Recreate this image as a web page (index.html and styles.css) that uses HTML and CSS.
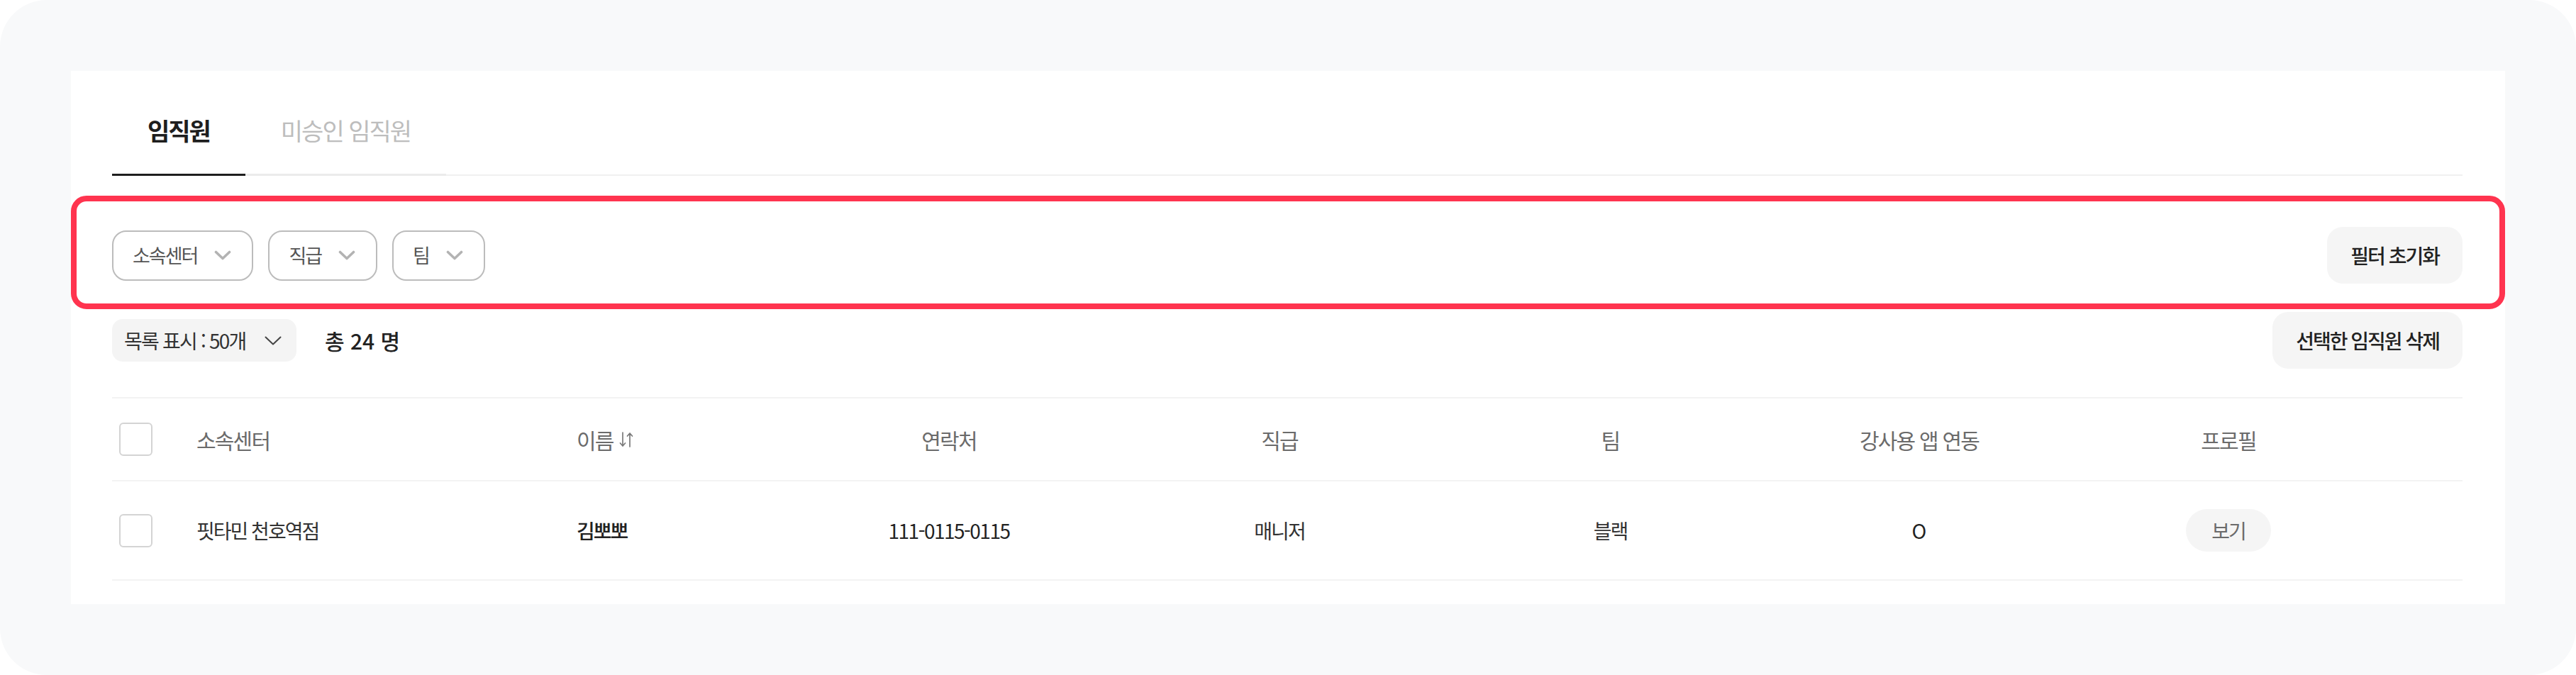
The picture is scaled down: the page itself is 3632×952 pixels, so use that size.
FILE: index.html
```html
<!DOCTYPE html>
<html lang="ko">
<head>
<meta charset="utf-8">
<title>임직원</title>
<link rel="stylesheet" href="styles.css">
</head>
<body>
<div class="panel">
  <main class="card">
    <nav class="tabs">
      <div class="tab tab-active">임직원</div>
      <div class="tab">미승인 임직원</div>
    </nav>

    <section class="filters">
      <div class="chips">
        <button class="chip"><span class="chip-label">소속센터</span><svg class="chip-caret" viewBox="0 0 24 14" width="24" height="14"><polyline points="2.5,2.5 12,11.5 21.5,2.5"/></svg></button>
        <button class="chip"><span class="chip-label">직급</span><svg class="chip-caret" viewBox="0 0 24 14" width="24" height="14"><polyline points="2.5,2.5 12,11.5 21.5,2.5"/></svg></button>
        <button class="chip"><span class="chip-label">팀</span><svg class="chip-caret" viewBox="0 0 24 14" width="24" height="14"><polyline points="2.5,2.5 12,11.5 21.5,2.5"/></svg></button>
      </div>
      <button class="btn btn-reset">필터 초기화</button>
    </section>

    <div class="toolbar">
      <div class="toolbar-left">
        <button class="page-size"><span>목록 표시 : 50개</span><svg class="page-caret" viewBox="0 0 24 13" width="24" height="13"><polyline points="1.5,1.5 12,11.5 22.5,1.5"/></svg></button>
        <div class="total">총 24 명</div>
      </div>
      <button class="btn btn-delete">선택한 임직원 삭제</button>
    </div>

    <div class="table">
      <div class="row row-head">
        <div class="cell"><span class="checkbox"></span></div>
        <div class="cell">소속센터</div>
        <div class="cell cell-sort">이름<svg class="sort-icon" viewBox="0 0 20 24" width="20" height="24"><path d="M5 2 V21 M1.5 17 L5 21 L8.5 17 M15 22 V3 M11.5 7 L15 3 L18.5 7"/></svg></div>
        <div class="cell center">연락처</div>
        <div class="cell center">직급</div>
        <div class="cell center">팀</div>
        <div class="cell center">강사용 앱 연동</div>
        <div class="cell center">프로필</div>
        <div class="cell"></div>
      </div>
      <div class="row row-body">
        <div class="cell"><span class="checkbox"></span></div>
        <div class="cell">핏타민 천호역점</div>
        <div class="cell name">김뽀뽀</div>
        <div class="cell center phone">111-0115-0115</div>
        <div class="cell center">매니저</div>
        <div class="cell center">블랙</div>
        <div class="cell center latin">O</div>
        <div class="cell center"><button class="view-btn">보기</button></div>
        <div class="cell"></div>
      </div>
    </div>
  </main>
</div>
</body>
</html>
```

FILE: styles.css
```css
html, body {
  margin: 0;
  padding: 0;
  background: #ffffff;
}

body {
  font-family: "Noto Sans CJK KR", "Noto Sans", sans-serif;
  color: #222222;
}

button {
  font: inherit;
  color: inherit;
  border: 0;
  background: none;
  padding: 0;
  margin: 0;
}

.panel {
  width: 3632px;
  height: 952px;
  box-sizing: border-box;
  background: #f8f9fa;
  border-radius: 66px;
  padding: 100px;
}

.card {
  background: #ffffff;
  height: 752px;
  box-sizing: border-box;
  padding: 0 60px 0 58px;
}

/* Tabs */
.tabs {
  display: flex;
  border-bottom: 2px solid #f0f0f0;
}

.tab {
  padding: 64px 50px 41px;
  margin-bottom: -2px;
  font-size: 34px;
  line-height: 40px;
  letter-spacing: -2px;
  color: #bdbdbd;
  border-bottom: 3px solid #ebebeb;
}

.tab-active {
  color: #1e1e1e;
  font-weight: 700;
  border-bottom-color: #1e1e1e;
}

/* Filters */
.filters {
  position: relative;
  margin-top: 72px;
  height: 80px;
  display: flex;
  align-items: center;
  justify-content: space-between;
}

.filters::after {
  content: "";
  position: absolute;
  left: -58px;
  right: -60px;
  top: -44px;
  bottom: -36px;
  border: 8px solid #ff344f;
  border-radius: 22px;
  pointer-events: none;
}

.chips {
  display: flex;
  gap: 21px;
}

.chip {
  height: 71px;
  box-sizing: border-box;
  display: flex;
  align-items: center;
  gap: 24px;
  padding: 0 29px 0 27px;
  border: 2px solid #bcbcbc;
  border-radius: 20px;
  background: #ffffff;
}

.chip-label {
  font-size: 27px;
  line-height: 32px;
  letter-spacing: -2px;
  color: #555555;
}

.chip-caret {
  display: block;
  fill: none;
  stroke: #b3b3b3;
  stroke-width: 3.6;
  stroke-linecap: round;
  stroke-linejoin: round;
}

.btn {
  height: 80px;
  box-sizing: border-box;
  padding: 0 33px;
  border-radius: 22px;
  background: #f5f5f5;
  font-size: 28px;
  line-height: 32px;
  letter-spacing: -2px;
  font-weight: 500;
  color: #222222;
}

/* Toolbar */
.toolbar {
  margin-top: 40px;
  height: 80px;
  display: flex;
  align-items: center;
  justify-content: space-between;
}

.toolbar-left {
  display: flex;
  align-items: center;
  gap: 40px;
}

.page-size {
  width: 260px;
  height: 60px;
  box-sizing: border-box;
  display: flex;
  align-items: center;
  justify-content: space-between;
  padding: 0 21px 0 17px;
  border-radius: 15px;
  background: #f4f4f4;
  font-size: 28px;
  line-height: 32px;
  letter-spacing: -1.8px;
  color: #333333;
}

.page-caret {
  display: block;
  fill: none;
  stroke: #444444;
  stroke-width: 2;
  stroke-linecap: round;
  stroke-linejoin: round;
}

.total {
  font-size: 30px;
  line-height: 36px;
  font-weight: 500;
  color: #222222;
}

/* Table */
.table {
  margin-top: 40px;
  border-top: 2px solid #f3f3f3;
}

.row {
  display: grid;
  grid-template-columns: 119px 536px 292px 466px 466px 467px 404px 468px 1fr;
  align-items: center;
  border-bottom: 2px solid #f3f3f3;
}

.row-head {
  height: 115px;
  font-size: 30px;
  line-height: 34px;
  letter-spacing: -1.8px;
  color: #6b6b6b;
}

.row-body {
  height: 138px;
  font-size: 28px;
  line-height: 32px;
  letter-spacing: -2px;
  color: #333333;
}

.cell {
  display: flex;
  align-items: center;
}

.center {
  justify-content: center;
}

.cell-sort {
  gap: 8px;
}

.sort-icon {
  display: block;
  fill: none;
  stroke: #7a7a7a;
  stroke-width: 1.7;
  stroke-linecap: round;
  stroke-linejoin: round;
}

.checkbox {
  display: block;
  width: 47px;
  height: 47px;
  box-sizing: border-box;
  margin-left: 10px;
  border: 2px solid #d4d4d4;
  border-radius: 6px;
  background: #ffffff;
}

.name {
  font-weight: 500;
  color: #222222;
}

.phone {
  letter-spacing: -1.5px;
  color: #222222;
}

.latin {
  letter-spacing: 0;
  color: #222222;
}

.view-btn {
  width: 120px;
  height: 60px;
  border-radius: 30px;
  background: #f5f5f5;
  font-size: 28px;
  line-height: 32px;
  letter-spacing: -2px;
  color: #6b6b6b;
}
```
